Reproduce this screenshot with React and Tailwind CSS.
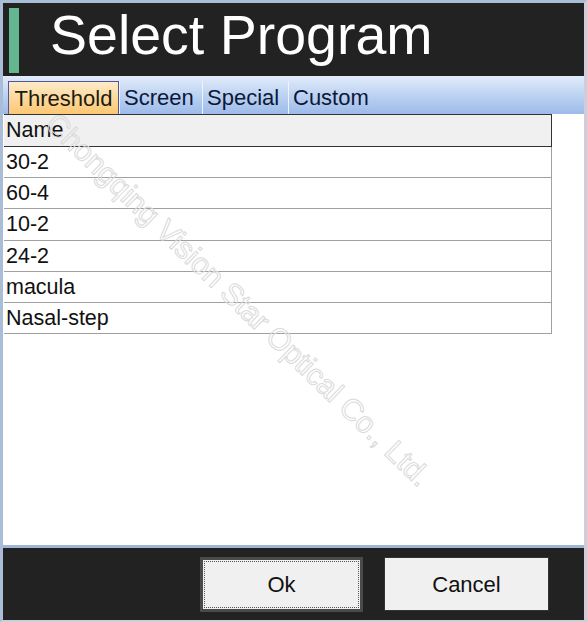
const programs = ['30-2', '60-4', '10-2', '24-2', 'macula', 'Nasal-step'];

const tabs = [
  { label: 'Threshold', width: 'w-[111px]', active: true },
  { label: 'Screen', width: 'w-[83px]' },
  { label: 'Special', width: 'w-[86px]' },
  { label: 'Custom', width: 'w-[88px]' },
];

export default function App() {
  return (
    <div className="relative flex h-[622px] w-[587px] flex-col overflow-hidden border-t-[3px] border-l-[3px] border-r-[3px] border-b-[2px] border-t-[#a9bdd6] border-l-[#a9bdd6] border-r-[#c9d0da] border-b-[#c9d0da] bg-white font-['Liberation_Sans',Arial,sans-serif]">
      {/* title bar */}
      <div className="flex h-[73px] shrink-0 items-start bg-[#222222] pl-[6px] pt-[5px]">
        <div className="h-[65px] w-[10px] bg-[#62b690]" />
        <h1 className="ml-[31px] text-[55.5px] leading-none text-white">Select Program</h1>
      </div>

      {/* tab strip */}
      <div className="flex h-[38px] shrink-0 items-end bg-[linear-gradient(180deg,#e2ecfb,#b9d0f1_55%,#9dbbe9)] pl-[5px]">
        {tabs.map((tab) =>
          tab.active ? (
            <div
              key={tab.label}
              className={`${tab.width} flex h-[33px] items-center justify-center border border-b-0 border-[#54549a] bg-[linear-gradient(180deg,#fdebc8,#fcd595_60%,#fbc772)] text-[22px] text-[#1e1a10]`}
            >
              {tab.label}
            </div>
          ) : (
            <div
              key={tab.label}
              className={`${tab.width} flex h-[33px] items-center border-l border-l-[#eef4fd] pl-[4px] text-[22px] text-[#0d1838]`}
            >
              {tab.label}
            </div>
          )
        )}
      </div>

      {/* list */}
      <div className="flex-1 pl-[1px]">
        <div className="w-[548px]">
          <div className="flex h-[33px] items-center border-y border-r border-[#333333] bg-[#f0f0f0] pl-[2px] text-[21.5px] text-[#111]">
            Name
          </div>
          {programs.map((p) => (
            <div
              key={p}
              className="flex h-[31.2px] items-center border-b border-r border-[#a0a0a0] pl-[2px] text-[21.5px] text-[#111]"
            >
              {p}
            </div>
          ))}
        </div>
      </div>

      {/* footer */}
      <div className="h-[3px] shrink-0 bg-[#9fb6d6]" />
      <div className="flex h-[72px] shrink-0 items-start justify-end gap-[21px] bg-[#222222] pr-[35px] pt-[9px]">
        <button className="h-[55px] w-[163px] border-[3px] border-[#4a4a4a] bg-[#f0f0f0] p-[1px] text-[22px] text-[#111]">
          <span className="flex h-full w-full items-center justify-center border border-dotted border-[#555]">
            Ok
          </span>
        </button>
        <button className="flex h-[54px] w-[165px] items-center justify-center border border-[#333] bg-[#f0f0f0] text-[22px] text-[#111]">
          Cancel
        </button>
      </div>

      {/* watermark */}
      <span className="pointer-events-none absolute left-[58px] top-[105px] origin-top-left rotate-[44deg] whitespace-nowrap text-[30px] leading-none text-transparent [-webkit-text-stroke:1px_#dadada]">
        Chongqing Vision Star Optical Co., Ltd.
      </span>
    </div>
  );
}
